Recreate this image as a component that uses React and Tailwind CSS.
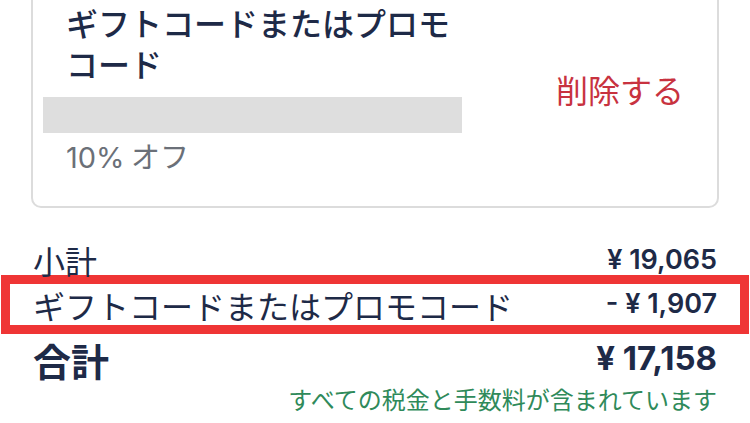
import React from "react";

const jp = "font-['Noto_Sans_CJK_JP','Noto_Sans',sans-serif]";
const num = "font-['Inter','Noto_Sans_CJK_JP',sans-serif]";

export default function App() {
  return (
    <div className={`w-[750px] h-[423px] overflow-hidden bg-white ${jp} text-[#1e2a47]`}>
      <div className="px-[31px]">
        {/* Promo card */}
        <div className="-mt-[30px] border-2 border-[#dcdcdc] rounded-[10px] pt-[30px] pb-[30px] px-[33px] flex items-center justify-between">
          <div className="w-[396px]">
            <div className="text-[32px] leading-[41px] font-medium">ギフトコードまたはプロモコード</div>
            <div className="mt-[13px] -ml-[23px] w-[419px] h-[36px] bg-[#dedede]"></div>
            <div className="mt-[4px] text-[29px] leading-[36px] text-[#6b7078]">
              <span className={num}>10%</span> オフ
            </div>
          </div>
          <button className="text-[32px] leading-[40px] text-[#c8323f]">削除する</button>
        </div>
      </div>

      {/* Summary */}
      <div className="px-[33px] mt-[37px]">
        <div className="flex items-center justify-between h-[30px]">
          <span className="text-[32px]">小計</span>
          <span className={`${num} text-[27px] font-semibold`}>¥ 19,065</span>
        </div>
        <div className="-mx-[32px] border-[9px] border-[#ef3535] px-[23px] h-[59px] flex items-center justify-between">
          <span className="text-[32px]">ギフトコードまたはプロモコード</span>
          <span className={`${num} text-[27px] font-semibold`}>- ¥ 1,907</span>
        </div>
        <div className="flex items-center justify-between h-[50px]">
          <span className="text-[38px] font-bold">合計</span>
          <span className={`${num} text-[33px] font-bold`}>¥ 17,158</span>
        </div>
        <div className="text-right text-[24px] leading-[30px] text-[#2f8a5a]">
          すべての税金と手数料が含まれています
        </div>
      </div>
    </div>
  );
}
